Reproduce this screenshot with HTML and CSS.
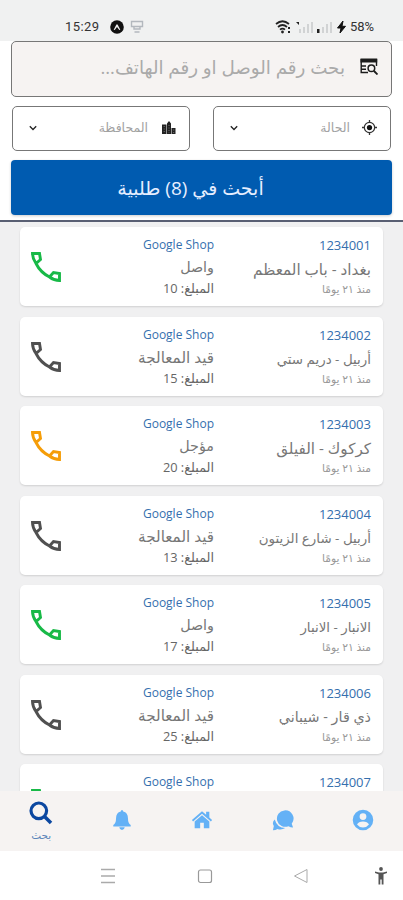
FILE: index.html
```html
<!DOCTYPE html>
<html lang="ar" dir="rtl">
<head>
<meta charset="utf-8">
<title>بحث</title>
<link rel="stylesheet" href="styles.css">
</head>
<body>
<svg class="defs" width="0" height="0" aria-hidden="true">
  <symbol id="phone" viewBox="0 0 30 30"><path d="M1.500 1.500H8.500L9.500 7.500L5 11.500Q1.500 6.500 1.500 1.500ZM5 11.500Q9.500 20.500 18.500 25L22.500 20.500L28.500 21.500V28.500Q23 28.500 18.500 25" fill="none" stroke="currentColor" stroke-width="2.900"/></symbol>
</svg>
<header class="status" dir="ltr">
  <span class="clock">15:29</span>
  <svg class="expo" viewBox="0 0 14 14"><circle cx="7" cy="7" r="6.800" fill="#111"/><path d="M3.700 9.700L6.300 4.800Q7 3.800 7.700 4.800L10.300 9.700L9.300 10L7 7L4.700 10Z" fill="#eee"/></svg>
  <svg class="cast" viewBox="0 0 14 14"><path d="M1.500 1.500H12.500V6.500H1.500ZM4 6.500V9H10V6.500M4.500 12H9.500" fill="none" stroke="#b3b8be" stroke-width="1.400"/></svg>
  <svg class="signals" viewBox="0 0 74 16"><g fill="none" stroke="#222" stroke-width="1.700"><path d="M1 5Q7.500-.5 14 5M3 8Q7.500 4 12 8M5 10.700Q7.500 8.500 10 10.700"/></g><circle cx="7.500" cy="13" r="1.400" fill="#222"/><path d="M13 8h2v2h-2zM13 12h2v2h-2zM21 3l3 0v3zM42 10h2.500v4H42z" fill="#222"/><path d="M24 10h2v4h-2zM28 8h2v6h-2zM32 5h2v9h-2zM36 3h2v11h-2zM47 8h2v6h-2zM51 5h2v9h-2zM55 3h2v11h-2z" fill="#d1d3d4"/><path d="M68 2L62.500 9H66L65 14L70.500 7.300H67Z" fill="#111" stroke="#111"/></svg>
  <span class="battery">58%</span>
</header>
<section class="filters">
  <div class="search">
    <svg class="scan" viewBox="0 0 18 17"><path d="M8 14.500H1.200V1M16.500 1V8M1.200 8H6M1.200 11.300H6" fill="none" stroke="#1c1c1c" stroke-width="1.400"/><path d="M.5 .5H17.200V4.500H.5Z" fill="#1c1c1c"/><circle cx="11.400" cy="10.200" r="3.300" fill="none" stroke="#1c1c1c" stroke-width="1.500"/><path d="M14 13L17.500 16.500" stroke="#1c1c1c" stroke-width="1.800"/></svg>
    <span class="hint">بحث رقم الوصل او رقم الهاتف...</span>
  </div>
  <div class="selects">
    <div class="select">
      <svg class="target" viewBox="0 0 16 16"><circle cx="8" cy="8" r="5.500" fill="none" stroke="#333" stroke-width="1.300"/><circle cx="8" cy="8" r="2.800" fill="#111"/><path d="M8 0V3M8 13V16M0 8H3M13 8H16" stroke="#333" stroke-width="1.400"/></svg>
      <span>الحالة</span>
      <svg class="chevron" viewBox="0 0 8 6"><path d="M.8 1.300L4 4.500L7.200 1.300" fill="none" stroke="#222" stroke-width="1.300"/></svg>
    </div>
    <div class="select">
      <svg class="city" viewBox="0 0 14 14"><path d="M0 3.500H4.500V13H0ZM5 2.500L7 0L9 2.500V13H5ZM9.500 7H13.500V13H9.500Z" fill="#222"/><path d="M2.200 5V12M7 4V12M11.700 8.500V12" stroke="#888" stroke-width=".8" stroke-dasharray="1 1.500"/></svg>
      <span>المحافظة</span>
      <svg class="chevron" viewBox="0 0 8 6"><path d="M.8 1.300L4 4.500L7.200 1.300" fill="none" stroke="#222" stroke-width="1.300"/></svg>
    </div>
  </div>
  <button class="submit">أبحث في (8) طلبية</button>
</section>
<main class="orders">
  <article class="card"><div class="place"><b>1234001</b><span class="wide">بغداد - باب المعظم</span><small>منذ ٢١ يومًا</small></div><div class="shop"><b>Google Shop</b><span>واصل</span><small>المبلغ: 10</small></div><svg class="phone green"><use href="#phone"/></svg></article>
  <article class="card"><div class="place"><b>1234002</b><span class="narrow">أربيل - دريم ستي</span><small>منذ ٢١ يومًا</small></div><div class="shop"><b>Google Shop</b><span class="wide">قيد المعالجة</span><small>المبلغ: 15</small></div><svg class="phone"><use href="#phone"/></svg></article>
  <article class="card"><div class="place"><b>1234003</b><span class="wide">كركوك - الفيلق</span><small>منذ ٢١ يومًا</small></div><div class="shop"><b>Google Shop</b><span>مؤجل</span><small>المبلغ: 20</small></div><svg class="phone orange"><use href="#phone"/></svg></article>
  <article class="card"><div class="place"><b>1234004</b><span class="narrow">أربيل - شارع الزيتون</span><small>منذ ٢١ يومًا</small></div><div class="shop"><b>Google Shop</b><span class="wide">قيد المعالجة</span><small>المبلغ: 13</small></div><svg class="phone"><use href="#phone"/></svg></article>
  <article class="card"><div class="place"><b>1234005</b><span class="narrow">الانبار - الانبار</span><small>منذ ٢١ يومًا</small></div><div class="shop"><b>Google Shop</b><span>واصل</span><small>المبلغ: 17</small></div><svg class="phone green"><use href="#phone"/></svg></article>
  <article class="card"><div class="place"><b>1234006</b><span>ذي قار - شيباني</span><small>منذ ٢١ يومًا</small></div><div class="shop"><b>Google Shop</b><span class="wide">قيد المعالجة</span><small>المبلغ: 25</small></div><svg class="phone"><use href="#phone"/></svg></article>
  <article class="card"><div class="place"><b>1234007</b></div><div class="shop"><b>Google Shop</b></div><svg class="phone green"><use href="#phone"/></svg></article>
</main>
<nav class="tabs" dir="ltr">
  <a class="tab active"><svg viewBox="0 0 24 24"><circle cx="9.800" cy="9.800" r="7.800" fill="none" stroke="currentColor" stroke-width="3.200"/><path d="M15.500 15.500L22 22" stroke="currentColor" stroke-width="3.600"/></svg><span>بحث</span></a>
  <a class="tab"><svg viewBox="0 0 24 24"><path d="M12 1Q13.300 1 13.300 2.700Q18.500 4 18.500 10Q18.500 15.500 21.500 17.500V19H2.500V17.500Q5.500 15.500 5.500 10Q5.500 4 10.700 2.700Q10.700 1 12 1ZM9 20H15Q14.500 23 12 23Q9.500 23 9 20Z" fill="currentColor"/></svg></a>
  <a class="tab"><svg viewBox="0 0 24 24"><path d="M1 12L12 2.500L16.500 6.400V3H20V9.400L23 12L21.700 13.500L12 5.200L2.300 13.500Z" fill="currentColor"/><path d="M4 13.500L12 6.700L20 13.500V21H14V15H10V21H4Z" fill="currentColor"/></svg></a>
  <a class="tab"><svg viewBox="0 0 24 24"><path d="M13.500 1.500A9 9 0 0 1 21.500 16L23 20.300Q20 20.200 18 18.700A9 9 0 1 1 13.500 1.500Z" fill="currentColor"/><path d="M3 11.500Q-.5 15 2 18.500L1 23.200Q4 23.200 6 21.700Q10 23.500 14.500 20.800Q5.500 20.500 3 11.500Z" fill="currentColor"/></svg></a>
  <a class="tab"><svg viewBox="0 0 24 24"><path fill-rule="evenodd" d="M12 .8A11.200 11.200 0 1 1 12 23.200A11.200 11.200 0 0 1 12 .8ZM12 4.500A3.700 3.700 0 1 0 12 11.900A3.700 3.700 0 0 0 12 4.500ZM5.500 17Q8 20.300 12 20.300Q16 20.300 18.500 17Q17 13.600 12 13.600Q7 13.600 5.500 17Z" fill="currentColor"/></svg></a>
</nav>
<footer class="system" dir="ltr">
  <svg viewBox="0 0 16 16"><path d="M1 1.500H15M1 8H15M1 14.500H15" stroke="#aaa" stroke-width="1.300"/></svg>
  <svg viewBox="0 0 16 16"><rect x="1.500" y="2" width="13" height="12.500" rx="2" fill="none" stroke="#999" stroke-width="1.200"/></svg>
  <svg viewBox="0 0 16 16"><path d="M14 1.500V14.500L1.500 8Z" fill="none" stroke="#aaa"/></svg>
  <svg class="access" viewBox="0 0 14 18"><circle cx="7" cy="2" r="1.900" fill="#555"/><path d="M1 4.500L5 5.500H9L13 4.500V6L9.500 7.200V17.500H7.700V12.500H6.300V17.500H4.500V7.200L1 6Z" fill="#555"/></svg>
</footer>
</body>
</html>
```
FILE: styles.css
```css
* { box-sizing: border-box; }
body {
  margin: 0;
  width: 403px;
  height: 900px;
  overflow: hidden;
  display: flex;
  flex-direction: column;
  background: #fff;
  font-family: "Open Sans", "DejaVu Sans", sans-serif;
}
svg { display: block; flex: none; }
.defs { position: absolute; }
.status {
  flex: none;
  height: 41px;
  padding: 12px 27px 0 65px;
  display: flex;
  align-items: center;
  background: #f0f1f1;
  color: #333;
  font: 13px Roboto, sans-serif;
}
.clock { width: 45px; letter-spacing: .4px; }
.expo { width: 14px; height: 14px; }
.cast { width: 14px; height: 14px; margin-left: 6px; }
.signals { width: 74px; height: 16px; margin-left: auto; }
.battery { width: 26px; margin-left: 1px; font-size: 13px; }
.filters {
  flex: none;
  height: 181px;
  padding: 0 11px;
  border-bottom: 2px solid #595f73;
}
.search {
  height: 56px;
  border: 1px solid #777;
  border-radius: 5px;
  background: #f6f3f2;
  padding: 0 13px 5px;
  display: flex;
  align-items: center;
  gap: 15px;
}
.scan { width: 18px; height: 17px; }
.hint { color: #aaa; font-size: 18.300px; white-space: nowrap; }
.selects { display: flex; justify-content: space-between; margin: 9px 1px 0; }
.select {
  width: 178px;
  height: 45px;
  border: 1px solid #777;
  border-radius: 5px;
  padding: 0 13px 2px 16px;
  display: flex;
  align-items: center;
  color: #a2a2a2;
  font-size: 12.500px;
}
.target { width: 15px; height: 15px; }
.city { width: 14px; height: 14px; }
.select span { margin-right: 12px; }
.city + span { margin-right: 14px; }
.chevron { width: 8px; height: 6px; margin-right: auto; }
.submit {
  display: block;
  width: 381px;
  height: 55px;
  margin: 9px 0 0;
  padding: 0 22px 0 0;
  border: 0;
  border-radius: 4px;
  background: #005bb0;
  color: #e6eeff;
  font: 19px "Open Sans", "DejaVu Sans", sans-serif;
  text-align: center;
  box-shadow: 0 1px 3px #0003;
}
.orders {
  flex: none;
  height: 569px;
  padding: 5px 20px 0;
  overflow: hidden;
  background: #f0f0f1;
}
.card {
  height: 79px;
  margin-bottom: 10.500px;
  padding: 0 12px;
  border-radius: 5px;
  background: #fff;
  box-shadow: 0 1px 2px #0002;
  display: flex;
}
.place, .shop { display: flex; flex-direction: column; align-items: flex-start; white-space: nowrap; }
.place { width: 157px; padding-top: 9px; }
.shop { width: 121px; padding-top: 7px; }
.card b { height: 22px; line-height: 22px; font-size: 12px; font-weight: 500; color: #356fae; }
.card .place b { line-height: 19px; font-size: 13px; }
.card span { height: 22px; line-height: 22px; font-size: 14.300px; color: #777; }
.card .wide { font-size: 15.200px; }
.card .narrow { font-size: 13.400px; }
.card small { height: 20px; line-height: 18px; font-size: 10.700px; color: #999; }
.card .shop small { line-height: 20px; font-size: 12.800px; color: #666; }
.phone { width: 30px; height: 30px; margin: 25px auto 0 -1px; color: #505050; }
.green { color: #18b947; }
.orange { color: #f59d08; }
.tabs {
  flex: none;
  height: 60px;
  display: grid;
  grid-template-columns: repeat(5, 80.500px);
  padding-left: 1px;
  background: #f6f3f2;
  color: #64b1f6;
}
.tab { display: flex; flex-direction: column; align-items: center; padding-top: 18px; }
.tab svg { width: 22px; height: 22px; }
.active { padding-top: 10px; color: #0b47a0; }
.active svg { width: 24px; height: 24px; }
.active span { font-size: 10.500px; line-height: 20px; color: #5b85b9; }
.system {
  flex: none;
  height: 49px;
  padding: 0 14px 0 100px;
  display: grid;
  grid-template-columns: 96.500px 96px 81.500px 14px;
  align-items: center;
}
.system svg { width: 16px; height: 16px; }
.system .access { width: 14px; height: 18px; }
```
